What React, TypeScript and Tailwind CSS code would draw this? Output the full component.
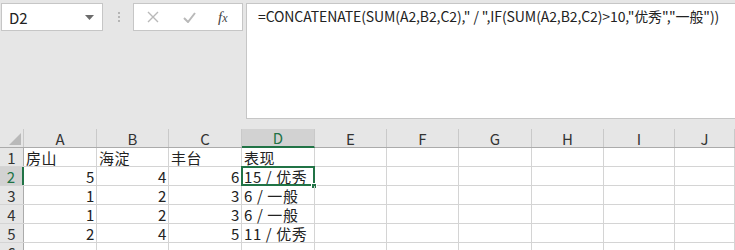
import React from 'react';

const cols = ['A', 'B', 'C', 'D', 'E', 'F', 'G', 'H', 'I', 'J'];
const widths = ['w-[73px]', 'w-[72px]', 'w-[73px]', 'w-[73px]', 'w-[72px]', 'w-[72px]', 'w-[73px]', 'w-[72px]', 'w-[71px]', 'flex-1'];

type Cell = { v: string; right?: boolean };
const rows: Cell[][] = [
  [{ v: '房山' }, { v: '海淀' }, { v: '丰台' }, { v: '表现' }],
  [{ v: '5', right: true }, { v: '4', right: true }, { v: '6', right: true }, { v: '15 / 优秀' }],
  [{ v: '1', right: true }, { v: '2', right: true }, { v: '3', right: true }, { v: '6 / 一般' }],
  [{ v: '1', right: true }, { v: '2', right: true }, { v: '3', right: true }, { v: '6 / 一般' }],
  [{ v: '2', right: true }, { v: '4', right: true }, { v: '5', right: true }, { v: '11 / 优秀' }],
  [],
];

const font = "font-['Noto_Sans_CJK_SC','Liberation_Sans',sans-serif]";

export default function App() {
  return (
    <div className={`w-[735px] h-[250px] overflow-hidden bg-[#e6e6e6] ${font} text-[#222]`}>
      {/* formula bar */}
      <div className="flex h-[129px] pt-[3px]">
        <div className="flex items-start">
          <div className="ml-[1px] w-[102px] h-[28px] bg-white border border-[#c6c6c6] flex items-center justify-between pl-[7px] pr-[8px]">
            <span className="text-[15px] leading-none">D2</span>
            <svg width="9" height="5" viewBox="0 0 9 5"><path d="M0 0h9L4.5 5z" fill="#6b6b6b" /></svg>
          </div>
          <div className="w-[30px] h-[28px] flex flex-col items-center justify-center gap-[2px] pl-[1px]">
            <span className="w-[2px] h-[2px] bg-[#b5b5b5]" />
            <span className="w-[2px] h-[2px] bg-[#b5b5b5]" />
            <span className="w-[2px] h-[2px] bg-[#b5b5b5]" />
          </div>
          <div className="w-[110px] h-[28px] bg-white border border-[#c6c6c6] flex items-center">
            <svg className="ml-[13px]" width="12" height="12" viewBox="0 0 12 12">
              <path d="M1 1l10 10M11 1L1 11" stroke="#b9b9b9" strokeWidth="1.4" />
            </svg>
            <svg className="ml-[24px]" width="13" height="11" viewBox="0 0 13 11">
              <path d="M1 6l4 4 7-9" stroke="#b9b9b9" strokeWidth="2" fill="none" />
            </svg>
            <span className="ml-[22px] text-[15px] italic text-[#444] font-['Liberation_Serif',serif] leading-none">
              f<span className="text-[12px]">x</span>
            </span>
          </div>
        </div>
        <div className="ml-[3px] flex-1 h-[116px] bg-white border-l border-b border-t border-[#c6c6c6] pl-[11px] pt-[1px] leading-[20px]">
          <span className="text-[14px] tracking-[-0.1px]">
            =CONCATENATE(SUM(A2,B2,C2)," / ",IF(SUM(A2,B2,C2)&gt;10,"优秀","一般"))
          </span>
        </div>
      </div>

      {/* column headers */}
      <div className="flex h-[19px] border-b border-[#ababab]">
        <div className="w-[24px] relative border-r border-[#c9c9c9] shrink-0">
          <svg className="absolute right-[2px] bottom-[2px]" width="12" height="12" viewBox="0 0 12 12">
            <path d="M12 0v12H0z" fill="#b9b9b9" />
          </svg>
        </div>
        {cols.map((c, i) => (
          <div
            key={c}
            className={`${widths[i]} shrink-0 flex items-center justify-center text-[15px] leading-none text-[#333] border-r border-[#c9c9c9] ${
              c === 'D' ? 'bg-[#d2d2d2] text-[#217346] border-b-2 border-b-[#217346] -mb-[1px]' : ''
            }`}
          >
            {c}
          </div>
        ))}
      </div>

      {/* rows */}
      <div className="bg-white">
        {rows.map((r, ri) => (
          <div key={ri} className="flex h-[19px] border-b border-[#d4d4d4]">
            <div
              className={`w-[24px] shrink-0 flex items-center justify-center text-[15px] leading-none ${
                ri === 1 ? 'bg-[#d2d2d2] text-[#217346] border-r-2 border-r-[#217346]' : 'bg-[#e6e6e6] text-[#333] border-r border-[#ababab]'
              }`}
            >
              {ri + 1}
            </div>
            {cols.map((c, ci) => {
              const cell = r[ci];
              const sel = ri === 1 && ci === 3;
              return (
                <div
                  key={c}
                  className={`${widths[ci]} shrink-0 relative flex items-center text-[15px] leading-none tracking-[0.6px] border-r border-[#d4d4d4] ${
                    cell?.right ? 'justify-end pr-[1px]' : 'pl-[2px]'
                  }`}
                >
                  {cell?.v}
                  {sel && (
                    <>
                      <div className="absolute -left-[1px] -top-[1px] -right-[1px] -bottom-[1px] border-2 border-[#217346]" />
                      <div className="absolute -right-[3px] -bottom-[4px] w-[6px] h-[6px] bg-[#217346] border border-white" />
                    </>
                  )}
                </div>
              );
            })}
          </div>
        ))}
      </div>
    </div>
  );
}
